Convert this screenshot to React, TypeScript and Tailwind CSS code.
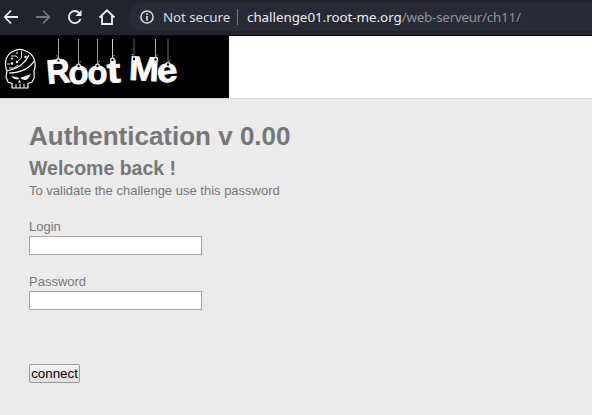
import React from "react";

const strings = [
  { x: 58.5, end: 60.5, side: -1, color: "#aaa" },
  { x: 78.5, end: 66, side: 1, color: "#999" },
  { x: 97.5, end: 66, side: 1, color: "#999" },
  { x: 112.5, end: 60, side: 1, color: "#ccc" },
  { x: 134, end: 59, side: -1, color: "#666" },
  { x: 155.5, end: 59.5, side: 1, color: "#aaa" },
  { x: 168, end: 64.5, side: 1, color: "#666" },
];

const letters = [
  { c: "R", x: 46.5, y: 83, w: 23.5, r: -5 },
  { c: "o", x: 68.5, y: 83.5, w: 20, r: 0 },
  { c: "o", x: 87.5, y: 83.5, w: 20, r: 0 },
  { c: "t", x: 107, y: 82.5, w: 13.5, r: -3 },
  { c: "M", x: 129, y: 80.5, w: 30, r: 3 },
  { c: "e", x: 157, y: 82, w: 20.5, r: -6 },
];

function Logo() {
  return (
    <svg className="block h-[62px] w-[229px] bg-black" viewBox="0 36 229 62">
      <g fill="none" stroke="#fff" strokeWidth="1.2" strokeLinejoin="round">
        <path d="M7 71 C3 62 7 53 15 50.5 Q20 48 26 51 C34 54 37 63 34 71 L34.2 78 L32 82 L28 83.5 V88 H12 V83.5 L8 82 L6 77 Z" />
        <path d="M7 71 C17 69 25 64 29 55" />
        <path d="M9 73 C21 73 30 68 34 61" />
        <path d="M7 64 H10 M9 68 H14 L18 65 M11 56 H16 L18 58 M17 51.5 V54 M21.5 51 V58 L18 61" strokeWidth="0.9" />
        <path d="M16 84 V88 M20 84 V88 M24 84 V88" strokeWidth="1" />
      </g>
      <g fill="#fff">
        <path d="M11 76 L19.5 78 L18 79.5 Q14 79.5 11 76 Z" />
        <path d="M20 78 L31 74 L28 79 Q24 81 21.5 78.8 Z" />
        <path d="M19.3 80 L18 82.5 H21 Z" />
        <circle cx="12" cy="63.5" r="1.2" />
        <circle cx="17" cy="62" r="1.2" />
        <circle cx="12" cy="58.5" r="1" />
        <circle cx="25.5" cy="57" r="1.2" />
      </g>
      {letters.map((l, i) => (
        <text
          key={i}
          x={l.x}
          y={l.y}
          textLength={l.w}
          lengthAdjust="spacingAndGlyphs"
          transform={`rotate(${l.r} ${l.x + l.w / 2} 72)`}
          className="fill-white stroke-white stroke-[0.8px] font-['Liberation_Sans',sans-serif] text-[34px] font-bold"
        >
          {l.c}
        </text>
      ))}
      {strings.map((s, i) => (
        <g key={i}>
          <circle cx={s.x} cy={s.end} r="2.4" fill="#fff" />
          <circle cx={s.x} cy={s.end} r="1.2" fill="#000" />
          <path d={`M${s.x} 39 V${s.end - 1}`} stroke={s.color} strokeWidth="1" />
          <path d={`M${s.x} ${s.end - 2} l${2 * s.side} -3`} stroke="#ddd" strokeDasharray="1.5 1" />
        </g>
      ))}
    </svg>
  );
}

function Toolbar() {
  return (
    <div className="flex h-[36px] items-start border-b border-[#08090d] bg-[#21232d] pt-[3px]">
      <svg className="h-7 w-[129px] shrink-0" viewBox="0 3 129 28" fill="none" stroke="#eeeeee" strokeWidth="1.8">
        <path d="M18 17 H5 M11 10.5 L4.8 17 L11 23.5" />
        <path d="M36 17 H49 M43 10.5 L49.2 17 L43 23.5" stroke="#777880" />
        <path d="M79.3 13 A6 6 0 1 0 80.5 19" />
        <path d="M81.5 10 V16 H75.5 Z" fill="#eeeeee" stroke="none" />
        <path d="M99.5 17.5 L107 10.3 L114.5 17.5 M102 16 V24 H112 V16" />
      </svg>
      <div className="flex h-7 flex-1 items-center rounded-l-full bg-[#282a35] pl-[11px] font-['Noto_Sans',sans-serif] text-[13.4px] leading-7 whitespace-nowrap">
        <svg className="size-[14px] shrink-0" viewBox="0 0 14 14" fill="none" stroke="#dedfe2" strokeWidth="1.5">
          <circle cx="7" cy="7" r="6.1" />
          <path d="M7 6 V10.5 M7 3.3 V5" strokeWidth="1.7" />
        </svg>
        <span className="ml-[9px] w-[67px] tracking-[-0.1px] text-[#dedfe2]">Not secure</span>
        <span className="ml-[7px] h-4 w-px bg-[#777983]" />
        <span className="ml-[9px] tracking-[-0.04px] text-[#eeeeef]">
          challenge01.root-me.org<span className="tracking-[-0.24px] text-[#92949b]">/web-serveur/ch11/</span>
        </span>
      </div>
    </div>
  );
}

function Field({ label, type }: { label: string; type: string }) {
  return (
    <label className="block h-[55px]">
      <span className="block h-[17px] leading-[15px]">{label}</span>
      <input type={type} className="block h-[19px] w-[173px] border border-[#a5a5a5] bg-white px-px text-black outline-none" />
    </label>
  );
}

export default function App() {
  return (
    <div className="flex h-[415px] w-[592px] flex-col overflow-hidden bg-[#ebebeb] font-['Liberation_Sans',Arial,sans-serif] text-[13px] text-[#777777]">
      <Toolbar />
      <header className="h-[63px] shrink-0 border-b border-[#d8d8d8] bg-white">
        <Logo />
      </header>
      <main className="pl-[29px] pt-[22px]">
        <h1 className="text-[26px] font-bold leading-[30px]">Authentication v 0.00</h1>
        <h2 className="mt-[5px] text-[19.5px] font-bold leading-[24px]">Welcome back !</h2>
        <p className="mt-[3px] leading-[15px]">To validate the challenge use this password</p>
        <form className="mt-[21px]" onSubmit={(e) => e.preventDefault()}>
          <Field label="Login" type="text" />
          <Field label="Password" type="password" />
          <button className="mt-[35px] block h-[19px] w-[51px] rounded-[2px] border border-[#999] bg-linear-to-b from-[#f5f5f5] to-[#dddddd] text-[13.33px] leading-[17px] text-black">
            connect
          </button>
        </form>
      </main>
    </div>
  );
}
